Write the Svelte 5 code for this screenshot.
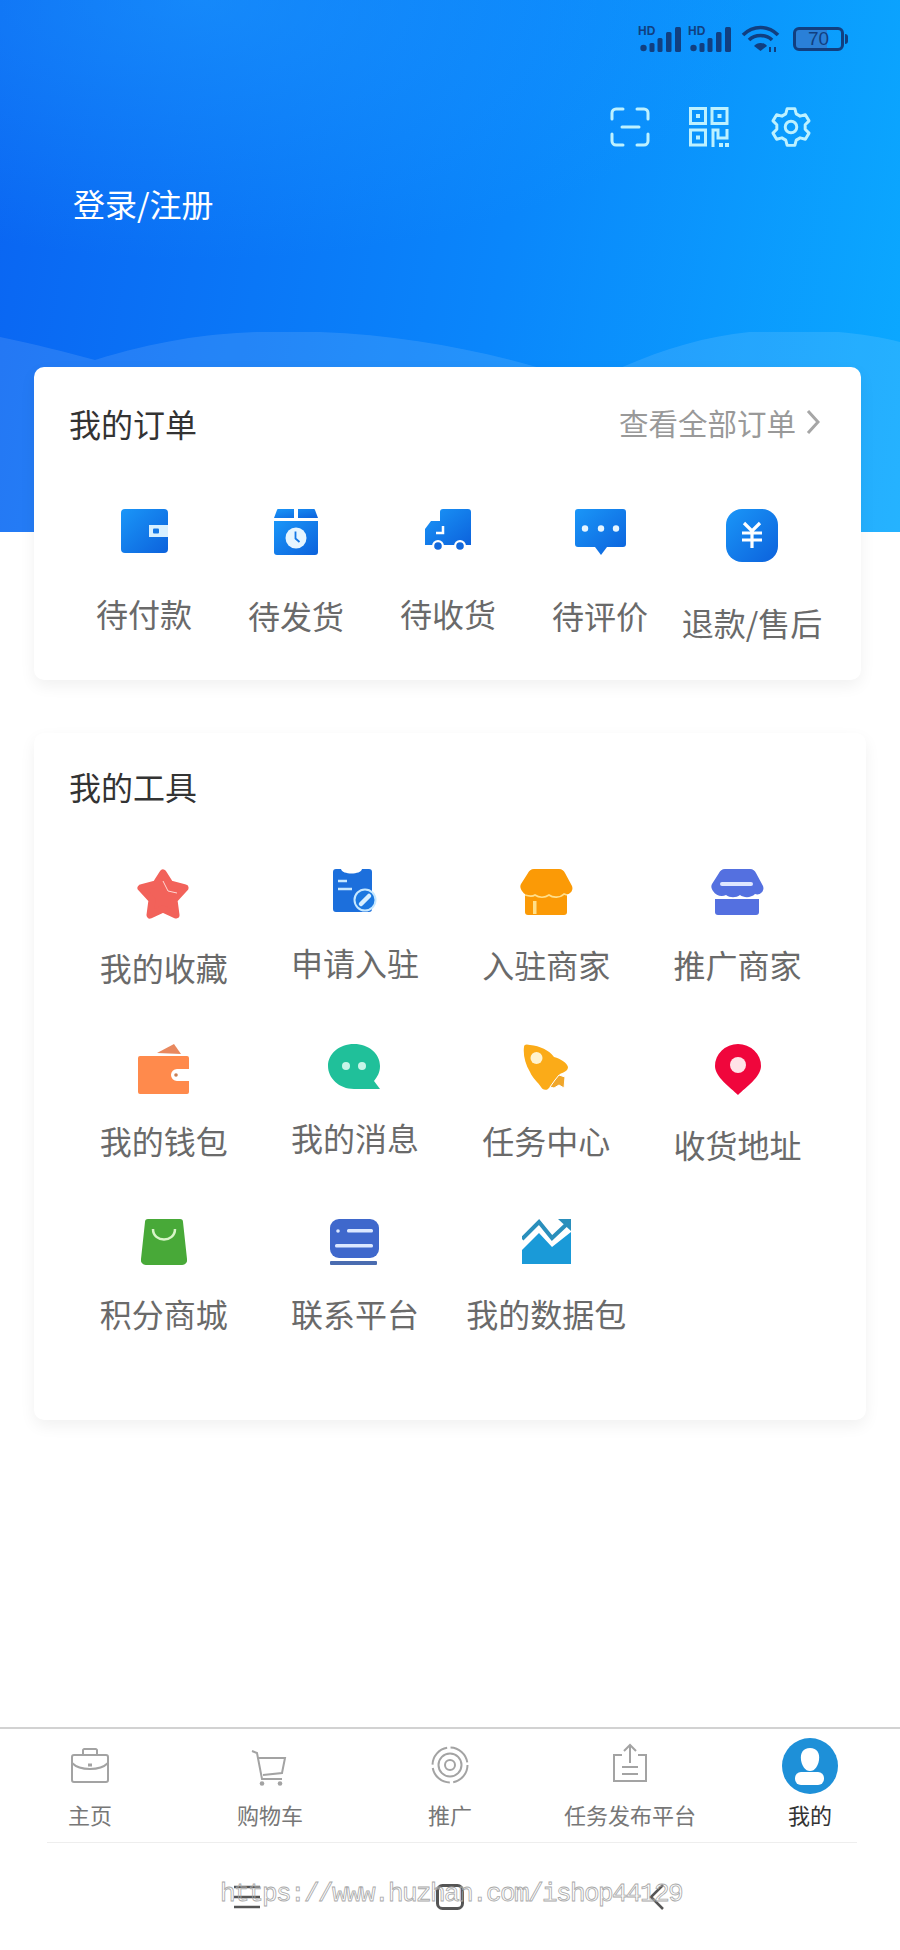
<script>
	const orders = [
		{ label: '待付款', icon: oWallet, nudge: 0 },
		{ label: '待发货', icon: oBox, nudge: 2 },
		{ label: '待收货', icon: oTruck, nudge: 0 },
		{ label: '待评价', icon: oChat, nudge: 2 },
		{ label: '退款/售后', icon: oYen, nudge: 9 }
	];

	const tools = [
		{ label: '我的收藏', icon: tStar, nudge: 5 },
		{ label: '申请入驻', icon: tForm, nudge: 0 },
		{ label: '入驻商家', icon: tShop, nudge: 2 },
		{ label: '推广商家', icon: tPromo, nudge: 2 },
		{ label: '我的钱包', icon: tWallet, nudge: 3 },
		{ label: '我的消息', icon: tChat, nudge: 0 },
		{ label: '任务中心', icon: tRocket, nudge: 3 },
		{ label: '收货地址', icon: tPin, nudge: 7 },
		{ label: '积分商城', icon: tBag, nudge: 1 },
		{ label: '联系平台', icon: tContact, nudge: 1 },
		{ label: '我的数据包', icon: tChart, nudge: 1 }
	];

	const tabs = [
		{ label: '主页', icon: nHome },
		{ label: '购物车', icon: nCart },
		{ label: '推广', icon: nTarget },
		{ label: '任务发布平台', icon: nUpload },
		{ label: '我的', icon: nMe, active: true }
	];
</script>

{#snippet oWallet()}
	<svg width="47" height="44" viewBox="0 0 47 44">
		<rect width="47" height="44" rx="4" fill="url(#blue)" />
		<rect x="28" y="16" width="19" height="12" fill="#d8f0ff" />
		<rect x="32" y="19.500" width="6" height="5" rx="1" fill="#1478e6" />
	</svg>
{/snippet}

{#snippet oBox()}
	<svg width="46" height="46" viewBox="0 0 46 46">
		<path d="M4 1a1.500 1.500 0 0 1 1-1H21V9H1Z M25 0H41a1.500 1.500 0 0 1 1 1L45 9H25Z" fill="url(#blue)" />
		<path d="M1 12H45V43a3 3 0 0 1-3 3H4a3 3 0 0 1-3-3Z" fill="url(#blue)" />
		<circle cx="23" cy="29" r="10.500" fill="#e6f5ff" />
		<path d="M22.500 22.500V29.500L26.500 33" fill="none" stroke="#1478e6" stroke-width="1.800" />
	</svg>
{/snippet}

{#snippet oTruck()}
	<svg width="46" height="44" viewBox="0 0 46 44">
		<path d="M15 3a3 3 0 0 1 3-3H43a3 3 0 0 1 3 3V36H0V20L6 12H15Z" fill="url(#blue)" />
		<path d="M18 17V24H11" fill="none" stroke="#fff" stroke-width="2.500" />
		<circle cx="13" cy="37" r="6" fill="#fff" />
		<circle cx="13" cy="37" r="3.800" fill="#1268dc" />
		<circle cx="35" cy="37" r="6" fill="#fff" />
		<circle cx="35" cy="37" r="3.800" fill="#1268dc" />
	</svg>
{/snippet}

{#snippet oChat()}
	<svg width="51" height="46" viewBox="0 0 51 46">
		<path d="M3 0H48a3 3 0 0 1 3 3V35a3 3 0 0 1-3 3H32L26 46L20 38H3a3 3 0 0 1-3-3V3a3 3 0 0 1 3-3Z" fill="url(#blue)" />
		<circle cx="10" cy="19.500" r="3.200" fill="#e6f5ff" />
		<circle cx="26" cy="19.500" r="3.200" fill="#e6f5ff" />
		<circle cx="41" cy="19.500" r="3.200" fill="#e6f5ff" />
	</svg>
{/snippet}

{#snippet oYen()}
	<svg width="52" height="53" viewBox="0 0 52 53">
		<rect width="52" height="53" rx="16" fill="url(#blue)" />
		<path d="M18 14L26 22L34 14M26 22V39M16 24H36M16 31H36" fill="none" stroke="#fff" stroke-width="3.200" />
	</svg>
{/snippet}

{#snippet tStar()}
	<svg width="53" height="51" viewBox="0 0 53 51">
		<path d="M26 4L33 15L48 19L37 31L39 46L26 40L13 46L15 31L4 19L19 15Z" fill="#f2625a" stroke="#f2625a" stroke-width="7" stroke-linejoin="round" />
		<path d="M26 12L31 22L40 24" fill="none" stroke="#ffd9d4" stroke-width="1" />
	</svg>
{/snippet}

{#snippet tForm()}
	<svg width="44" height="43" viewBox="0 0 44 43">
		<path d="M3 0H8C9 6 28 6 29 0H36a3 3 0 0 1 3 3V40a3 3 0 0 1-3 3H3a3 3 0 0 1-3-3V3a3 3 0 0 1 3-3Z" fill="#1c6fdc" />
		<path d="M5 12H14M5 20H19" stroke="#c6e8ff" stroke-width="2.500" />
		<circle cx="32" cy="31" r="10.500" fill="#1c78e0" stroke="#c6e8ff" stroke-width="2" />
		<path d="M28 35L36 27" stroke="#d8f0ff" stroke-width="4.500" stroke-linecap="round" />
	</svg>
{/snippet}

{#snippet tShop()}
	<svg width="53" height="46" viewBox="0 0 53 46">
		<path d="M5 24H47V43a3 3 0 0 1-3 3H8a3 3 0 0 1-3-3Z" fill="#fb9a06" />
		<path d="M14 0H39C42 0 44 2 45 4L52 17C54 22 49 27 44 25C40 29 33 29 29 26C25 29 19 29 15 26C11 28 5 27 2 22C0 19 0 17 1 15L8 4C9 2 11 0 14 0Z" fill="#fb9a06" />
		<path d="M5 26C8 27 12 28 15 26C19 29 25 29 29 26C33 29 40 29 44 25L47 26" fill="none" stroke="#ffdf8c" stroke-width="1.600" />
		<rect x="13" y="32" width="3.500" height="13" fill="#ffe08a" />
	</svg>
{/snippet}

{#snippet tPromo()}
	<svg width="53" height="46" viewBox="0 0 53 46">
		<path d="M4 30H48V43a3 3 0 0 1-3 3H7a3 3 0 0 1-3-3Z" fill="#5470e0" />
		<path d="M14 0H39C42 0 44 2 45 4L52 17C54 22 49 27 44 25C40 29 33 29 29 26C25 29 19 29 15 26C11 28 5 27 2 22C0 19 0 17 1 15L8 4C9 2 11 0 14 0Z" fill="#5470e0" />
		<rect x="9" y="13" width="33" height="4" rx="2" fill="#dfe6ff" />
	</svg>
{/snippet}

{#snippet tWallet()}
	<svg width="51" height="51" viewBox="0 0 51 51">
		<path d="M19 9L36 0L43 10Z" fill="#e8885e" />
		<path d="M2 12H49a2 2 0 0 1 2 2V25H39a6 6 0 0 0 0 12H51V48a2 2 0 0 1-2 2H2a2 2 0 0 1-2-2V14a2 2 0 0 1 2-2Z" fill="#ff8a4c" />
		<circle cx="38" cy="31" r="1.800" fill="#c97f55" />
	</svg>
{/snippet}

{#snippet tChat()}
	<svg width="53" height="46" viewBox="0 0 53 46">
		<path d="M26 0C41 0 52 10 52 22C52 29 49 33 46 37L52 45H26C11 45 0 34 0 22C0 10 11 0 26 0Z" fill="#20c09a" />
		<circle cx="18" cy="22" r="4" fill="#c8f5e8" />
		<circle cx="34" cy="22" r="4" fill="#c8f5e8" />
	</svg>
{/snippet}

{#snippet tRocket()}
	<svg width="46" height="46" viewBox="0 0 46 46">
		<path d="M1 3C1 0 4 0 7 1C17 2 26 6 31 13C38 15 44 19 45 23C45 27 41 28 37 30C33 35 29 41 25 45C22 47 19 45 18 43C15 38 10 35 7 28C2 20 0 10 1 3Z" fill="#fbab18" />
		<circle cx="13.500" cy="14" r="6" fill="#fff3cf" />
		<path d="M27 43L32 36L36 31L42 33L41 44L36 41L31 44Z" fill="#f0a62a" stroke="#fff" stroke-width="1" />
	</svg>
{/snippet}

{#snippet tPin()}
	<svg width="46" height="51" viewBox="0 0 46 51">
		<path d="M23 51C15 43 0 33 0 22A23 22 0 0 1 46 22C46 33 31 43 23 51Z" fill="#f0063c" />
		<circle cx="23" cy="21" r="8" fill="#ffe3e8" />
	</svg>
{/snippet}

{#snippet tBag()}
	<svg width="46" height="46" viewBox="0 0 46 46">
		<path d="M7 0H39a3 3 0 0 1 3 3L46 40a5 5 0 0 1-5 6H5a5 5 0 0 1-5-6L4 3a3 3 0 0 1 3-3Z" fill="#48a938" />
		<path d="M12 10C12 24 34 24 34 10" fill="none" stroke="#d8f5c8" stroke-width="2.500" />
	</svg>
{/snippet}

{#snippet tContact()}
	<svg width="49" height="46" viewBox="0 0 49 46">
		<rect width="49" height="39" rx="9" fill="#3f68cc" />
		<rect y="42" width="47" height="4" rx="1" fill="#4a6cb0" />
		<circle cx="8" cy="12" r="1.800" fill="#dce8ff" />
		<rect x="17" y="10" width="26" height="3.500" rx="1.500" fill="#dce8ff" />
		<rect x="5" y="25" width="38" height="3.500" rx="1.500" fill="#dce8ff" />
	</svg>
{/snippet}

{#snippet tChart()}
	<svg width="49" height="45" viewBox="0 0 49 45">
		<path d="M0 31L17 14L30 28L49 13V45H0Z" fill="#1a9ad8" />
		<path d="M0 20L17 3L30 19L46 4" fill="none" stroke="#2a8fbc" stroke-width="4" />
		<path d="M36 0H49V12Z" fill="#2a8fbc" />
	</svg>
{/snippet}

{#snippet nHome()}
	<svg width="40" height="56" viewBox="0 0 40 56">
		<g fill="none" stroke="#a3a3a3" stroke-width="2">
			<rect x="2" y="17" width="36" height="27" rx="2" />
			<path d="M13 17V12a1.500 1.500 0 0 1 2-1H25a1.500 1.500 0 0 1 2 1V17M2 25C10 33 30 33 38 25" />
			<path d="M18 27H22" stroke-width="3" />
		</g>
	</svg>
{/snippet}

{#snippet nCart()}
	<svg width="40" height="56" viewBox="0 0 40 56">
		<g fill="none" stroke="#a3a3a3" stroke-width="2">
			<path d="M2 13L7 15L12 41H32M7 20H35L32 35L13 37" />
		</g>
		<circle cx="12" cy="45.500" r="2.300" fill="#a3a3a3" />
		<circle cx="30" cy="45.500" r="2.300" fill="#a3a3a3" />
	</svg>
{/snippet}

{#snippet nTarget()}
	<svg width="40" height="56" viewBox="0 0 40 56">
		<g fill="none" stroke="#a3a3a3" stroke-width="2">
			<circle cx="20" cy="27" r="17.500" stroke-dasharray="24 3.500" />
			<circle cx="20" cy="27" r="11.500" />
			<circle cx="20" cy="27" r="5" />
		</g>
	</svg>
{/snippet}

{#snippet nUpload()}
	<svg width="40" height="56" viewBox="0 0 40 56">
		<g fill="none" stroke="#a3a3a3" stroke-width="2">
			<path d="M12 17H4V43H36V17H28M20 25V8M14 13L20 7L26 13M12 29H28M12 36H28" />
		</g>
	</svg>
{/snippet}

{#snippet nMe()}
	<svg width="56" height="56" viewBox="0 0 56 56">
		<circle cx="28" cy="28" r="28" fill="#1e90d8" />
		<path d="M28 10C35 10 38 15 37 22C36 28 33 33 28 33C23 33 20 28 19 22C18 15 21 10 28 10Z" fill="#fff" />
		<rect x="13" y="34" width="29" height="13" rx="6" fill="#fff" />
	</svg>
{/snippet}

{#snippet signal()}
	<svg width="43" height="28" viewBox="0 0 43 28">
		<text x="0" y="10" class="hd">HD</text>
		<g fill="#113f80">
			<circle cx="5.500" cy="23" r="3.200" />
			<rect x="11.500" y="18" width="5" height="9" rx="1.500" />
			<rect x="19.500" y="13" width="5" height="14" rx="1.500" />
			<rect x="28" y="7" width="5.500" height="20" rx="1.500" />
			<rect x="37" y="2" width="6" height="25" rx="1.500" />
		</g>
	</svg>
{/snippet}

<svg class="defs" width="0" height="0" aria-hidden="true">
	<defs>
		<linearGradient id="blue" x1="0" y1="0" x2="1" y2="1">
			<stop offset="0" stop-color="#1a96f8" />
			<stop offset="1" stop-color="#0c62dc" />
		</linearGradient>
	</defs>
</svg>

<div class="page">
	<header class="hero">
		<svg class="waves" viewBox="0 0 900 200" preserveAspectRatio="none" aria-hidden="true">
			<path d="M0 5C35 12 65 20 95 28C180 2 240 -2 320 0C400 3 470 16 540 36C570 36 600 36 620 36C680 10 730 -2 790 -2C830 -2 870 2 900 10V200H0Z" fill="#fff" fill-opacity="0.11" />
		</svg>

		<div class="status">
			{@render signal()}
			{@render signal()}
			<svg class="wifi" width="39" height="29" viewBox="0 0 39 29">
				<g fill="none" stroke="#113f80" stroke-width="3.600">
					<path d="M2 10C12 0 27 0 37 10" />
					<path d="M8 15C14 9 25 9 31 15" />
				</g>
				<path d="M13 21C16 17 23 17 26 21L19.500 26Z" fill="#113f80" />
				<path d="M29 27V22M34 27V22" stroke="#113f80" stroke-width="2" />
			</svg>
			<div class="battery"><span class="level">70</span><i class="cap"></i></div>
		</div>

		<div class="actions">
			<svg width="40" height="40" viewBox="0 0 40 40">
				<g fill="none" stroke="#bdf1ff" stroke-width="3" stroke-linecap="round">
					<path d="M13 2H6a4 4 0 0 0-4 4V12M27 2H34a4 4 0 0 1 4 4V12M2 27V34a4 4 0 0 0 4 4H13M38 27V34a4 4 0 0 1-4 4H27M12 20H29" />
				</g>
			</svg>
			<svg width="40" height="40" viewBox="0 0 40 40">
				<g fill="none" stroke="#bdf1ff" stroke-width="3">
					<rect x="1.500" y="1.500" width="15" height="15" />
					<rect x="23" y="1.500" width="15" height="15" />
					<rect x="1.500" y="23" width="15" height="15" />
					<path d="M24 40V23H29V31H38V22" />
				</g>
				<g fill="#bdf1ff">
					<rect x="7" y="7" width="4" height="4" />
					<rect x="28.500" y="7" width="4" height="4" />
					<rect x="7" y="28.500" width="4" height="4" />
					<rect x="30" y="36" width="4" height="4" />
					<rect x="36" y="36" width="4" height="4" />
				</g>
			</svg>
			<svg class="gear" width="42" height="42" viewBox="0 0 24 24">
				<g fill="none" stroke="#bdf1ff" stroke-width="1.700" stroke-linejoin="round">
					<circle cx="12" cy="12" r="3.300" />
					<path d="M9.800 1.500H14.200L15 4.500L17.200 5.800L20.200 5L22.300 8.500L20.100 10.700V13.300L22.300 15.500L20.200 19L17.200 18.200L15 19.500L14.200 22.500H9.800L9 19.500L6.800 18.200L3.800 19L1.700 15.500L3.900 13.300V10.700L1.700 8.500L3.800 5L6.800 5.800L9 4.500Z" />
				</g>
			</svg>
		</div>

		<div class="login">登录/注册</div>
	</header>

	<section class="card orders">
		<div class="card-head">
			<h2>我的订单</h2>
			<span class="more">查看全部订单
				<svg width="14" height="26" viewBox="0 0 14 26"><path d="M2 2L12 13L2 24" fill="none" stroke="#a6a6a6" stroke-width="3" /></svg>
			</span>
		</div>
		<div class="order-grid">
			{#each orders as item}
				<div class="cell">
					<div class="cell-icon">{@render item.icon()}</div>
					<span style="margin-top: {item.nudge}px">{item.label}</span>
				</div>
			{/each}
		</div>
	</section>

	<section class="card tools">
		<div class="card-head">
			<h2>我的工具</h2>
		</div>
		<div class="tool-grid">
			{#each tools as item}
				<div class="cell">
					<div class="cell-icon">{@render item.icon()}</div>
					<span style="margin-top: {item.nudge}px">{item.label}</span>
				</div>
			{/each}
		</div>
	</section>

	<nav class="tabbar">
		{#each tabs as tab}
			<div class="tab" class:active={tab.active}>
				<div class="tab-icon">{@render tab.icon()}</div>
				<span>{tab.label}</span>
			</div>
		{/each}
	</nav>

	<div class="sysbar">
		<svg width="26" height="24" viewBox="0 0 26 24"><path d="M0 2H26M0 12H26M0 22H26" stroke="#555" stroke-width="2.500" /></svg>
		<svg width="28" height="26" viewBox="0 0 28 26"><rect x="1.500" y="1.500" width="25" height="23" rx="5" fill="none" stroke="#555" stroke-width="3" /></svg>
		<svg class="back" width="16" height="26" viewBox="0 0 16 26"><path d="M14 1L2 13L14 25" fill="none" stroke="#555" stroke-width="2.500" /></svg>
		<div class="watermark">https://www.huzhan.com/ishop44129</div>
	</div>
</div>

<style>
	:global(body) {
		background: #fff;
	}

	.defs {
		position: absolute;
	}

	.page {
		display: flex;
		flex-direction: column;
		height: 1950px;
		overflow: hidden;
		font-family: 'Noto Sans CJK SC', 'Noto Sans', sans-serif;
	}

	.hero {
		position: relative;
		height: 532px;
		flex-shrink: 0;
		background:
			radial-gradient(ellipse 560px 260px at 200px 0, rgba(32, 160, 255, 0.5), transparent),
			linear-gradient(100deg, #0a64f2 0%, #0a86fb 55%, #0baaff 100%);
	}

	.waves {
		position: absolute;
		left: 0;
		top: 332px;
		width: 900px;
		height: 200px;
	}

	.status {
		position: relative;
		display: flex;
		justify-content: flex-end;
		align-items: center;
		gap: 7px;
		height: 30px;
		padding: 24px 52px 0 0;
	}

	.hd {
		font: 700 12px 'Liberation Sans', sans-serif;
		fill: #113f80;
	}

	.wifi {
		margin: 0 6px 0 3px;
	}

	.battery {
		display: flex;
		align-items: center;
		width: 55px;
		height: 24px;
	}

	.level {
		box-sizing: border-box;
		width: 51px;
		height: 24px;
		border: 3px solid #113f80;
		border-radius: 6px;
		background: linear-gradient(90deg, #2a80d8 68%, transparent 68%);
		color: #113f80;
		font: 19px/18px 'Liberation Sans', sans-serif;
		text-align: center;
	}

	.cap {
		width: 3px;
		height: 10px;
		margin-left: 1px;
		border-radius: 0 3px 3px 0;
		background: #113f80;
	}

	.actions {
		position: relative;
		display: flex;
		justify-content: flex-end;
		align-items: center;
		gap: 39px;
		margin-top: 52px;
		padding-right: 88px;
	}

	.gear {
		margin-left: 2px;
	}

	.login {
		position: relative;
		margin-top: 33px;
		padding-left: 73px;
		color: #fff;
		font-size: 32px;
		line-height: 44px;
	}

	.card {
		position: relative;
		margin-left: 34px;
		box-sizing: border-box;
		border-radius: 10px;
		background: #fff;
		box-shadow: 0 6px 16px rgba(0, 0, 0, 0.06);
	}

	.orders {
		width: 827px;
		height: 313px;
		margin-top: -165px;
		padding-top: 36px;
	}

	.tools {
		width: 832px;
		height: 687px;
		margin-top: 53px;
		padding-top: 33px;
	}

	.card-head {
		display: flex;
		justify-content: space-between;
		align-items: center;
		padding: 0 41px 0 35px;
		height: 40px;
	}

	h2 {
		margin: 0;
		color: #333;
		font-size: 32px;
		font-weight: 400;
		line-height: 40px;
	}

	.more {
		display: flex;
		align-items: center;
		gap: 10px;
		margin-top: -2px;
		color: #999;
		font-size: 29.500px;
		line-height: 40px;
	}

	.order-grid {
		display: grid;
		grid-template-columns: repeat(5, 152px);
		margin-top: 66px;
		padding-left: 34px;
	}

	.tool-grid {
		display: grid;
		grid-template-columns: repeat(4, 191.300px);
		row-gap: 59px;
		margin-top: 63px;
		padding-left: 34px;
	}

	.cell {
		display: flex;
		flex-direction: column;
		align-items: center;
		height: 116px;
		color: #6a6a6a;
		font-size: 32px;
		line-height: 40px;
		white-space: nowrap;
	}

	.cell-icon {
		display: flex;
		flex-shrink: 0;
		justify-content: center;
		align-items: flex-start;
		height: 73px;
	}

	.order-grid .cell-icon {
		height: 84px;
	}

	.cell-icon svg {
		display: block;
	}

	.tabbar {
		display: grid;
		grid-template-columns: repeat(5, 180px);
		margin-top: auto;
		border-top: 2px solid #d2d2d2;
		box-sizing: border-box;
		height: 115px;
		padding-top: 9px;
	}

	.tab {
		display: flex;
		flex-direction: column;
		align-items: center;
		color: #777;
		font-size: 22px;
		line-height: 30px;
		white-space: nowrap;
	}

	.tab.active {
		color: #333;
	}

	.tab-icon {
		display: flex;
		justify-content: center;
		height: 56px;
		margin-bottom: 5px;
	}

	.sysbar {
		position: relative;
		display: flex;
		align-items: center;
		gap: 176px;
		height: 108px;
		margin: 0 43px 0 47px;
		padding-left: 187px;
		box-sizing: border-box;
		border-top: 1px solid #eee;
	}

	.back {
		margin-left: 9px;
	}

	.watermark {
		position: absolute;
		left: 173px;
		top: 34px;
		color: transparent;
		-webkit-text-stroke: 0.800px #a8a8a8;
		font-family: 'Liberation Mono', monospace;
		font-size: 26px;
		letter-spacing: -1.600px;
		line-height: 34px;
		white-space: nowrap;
	}
</style>
